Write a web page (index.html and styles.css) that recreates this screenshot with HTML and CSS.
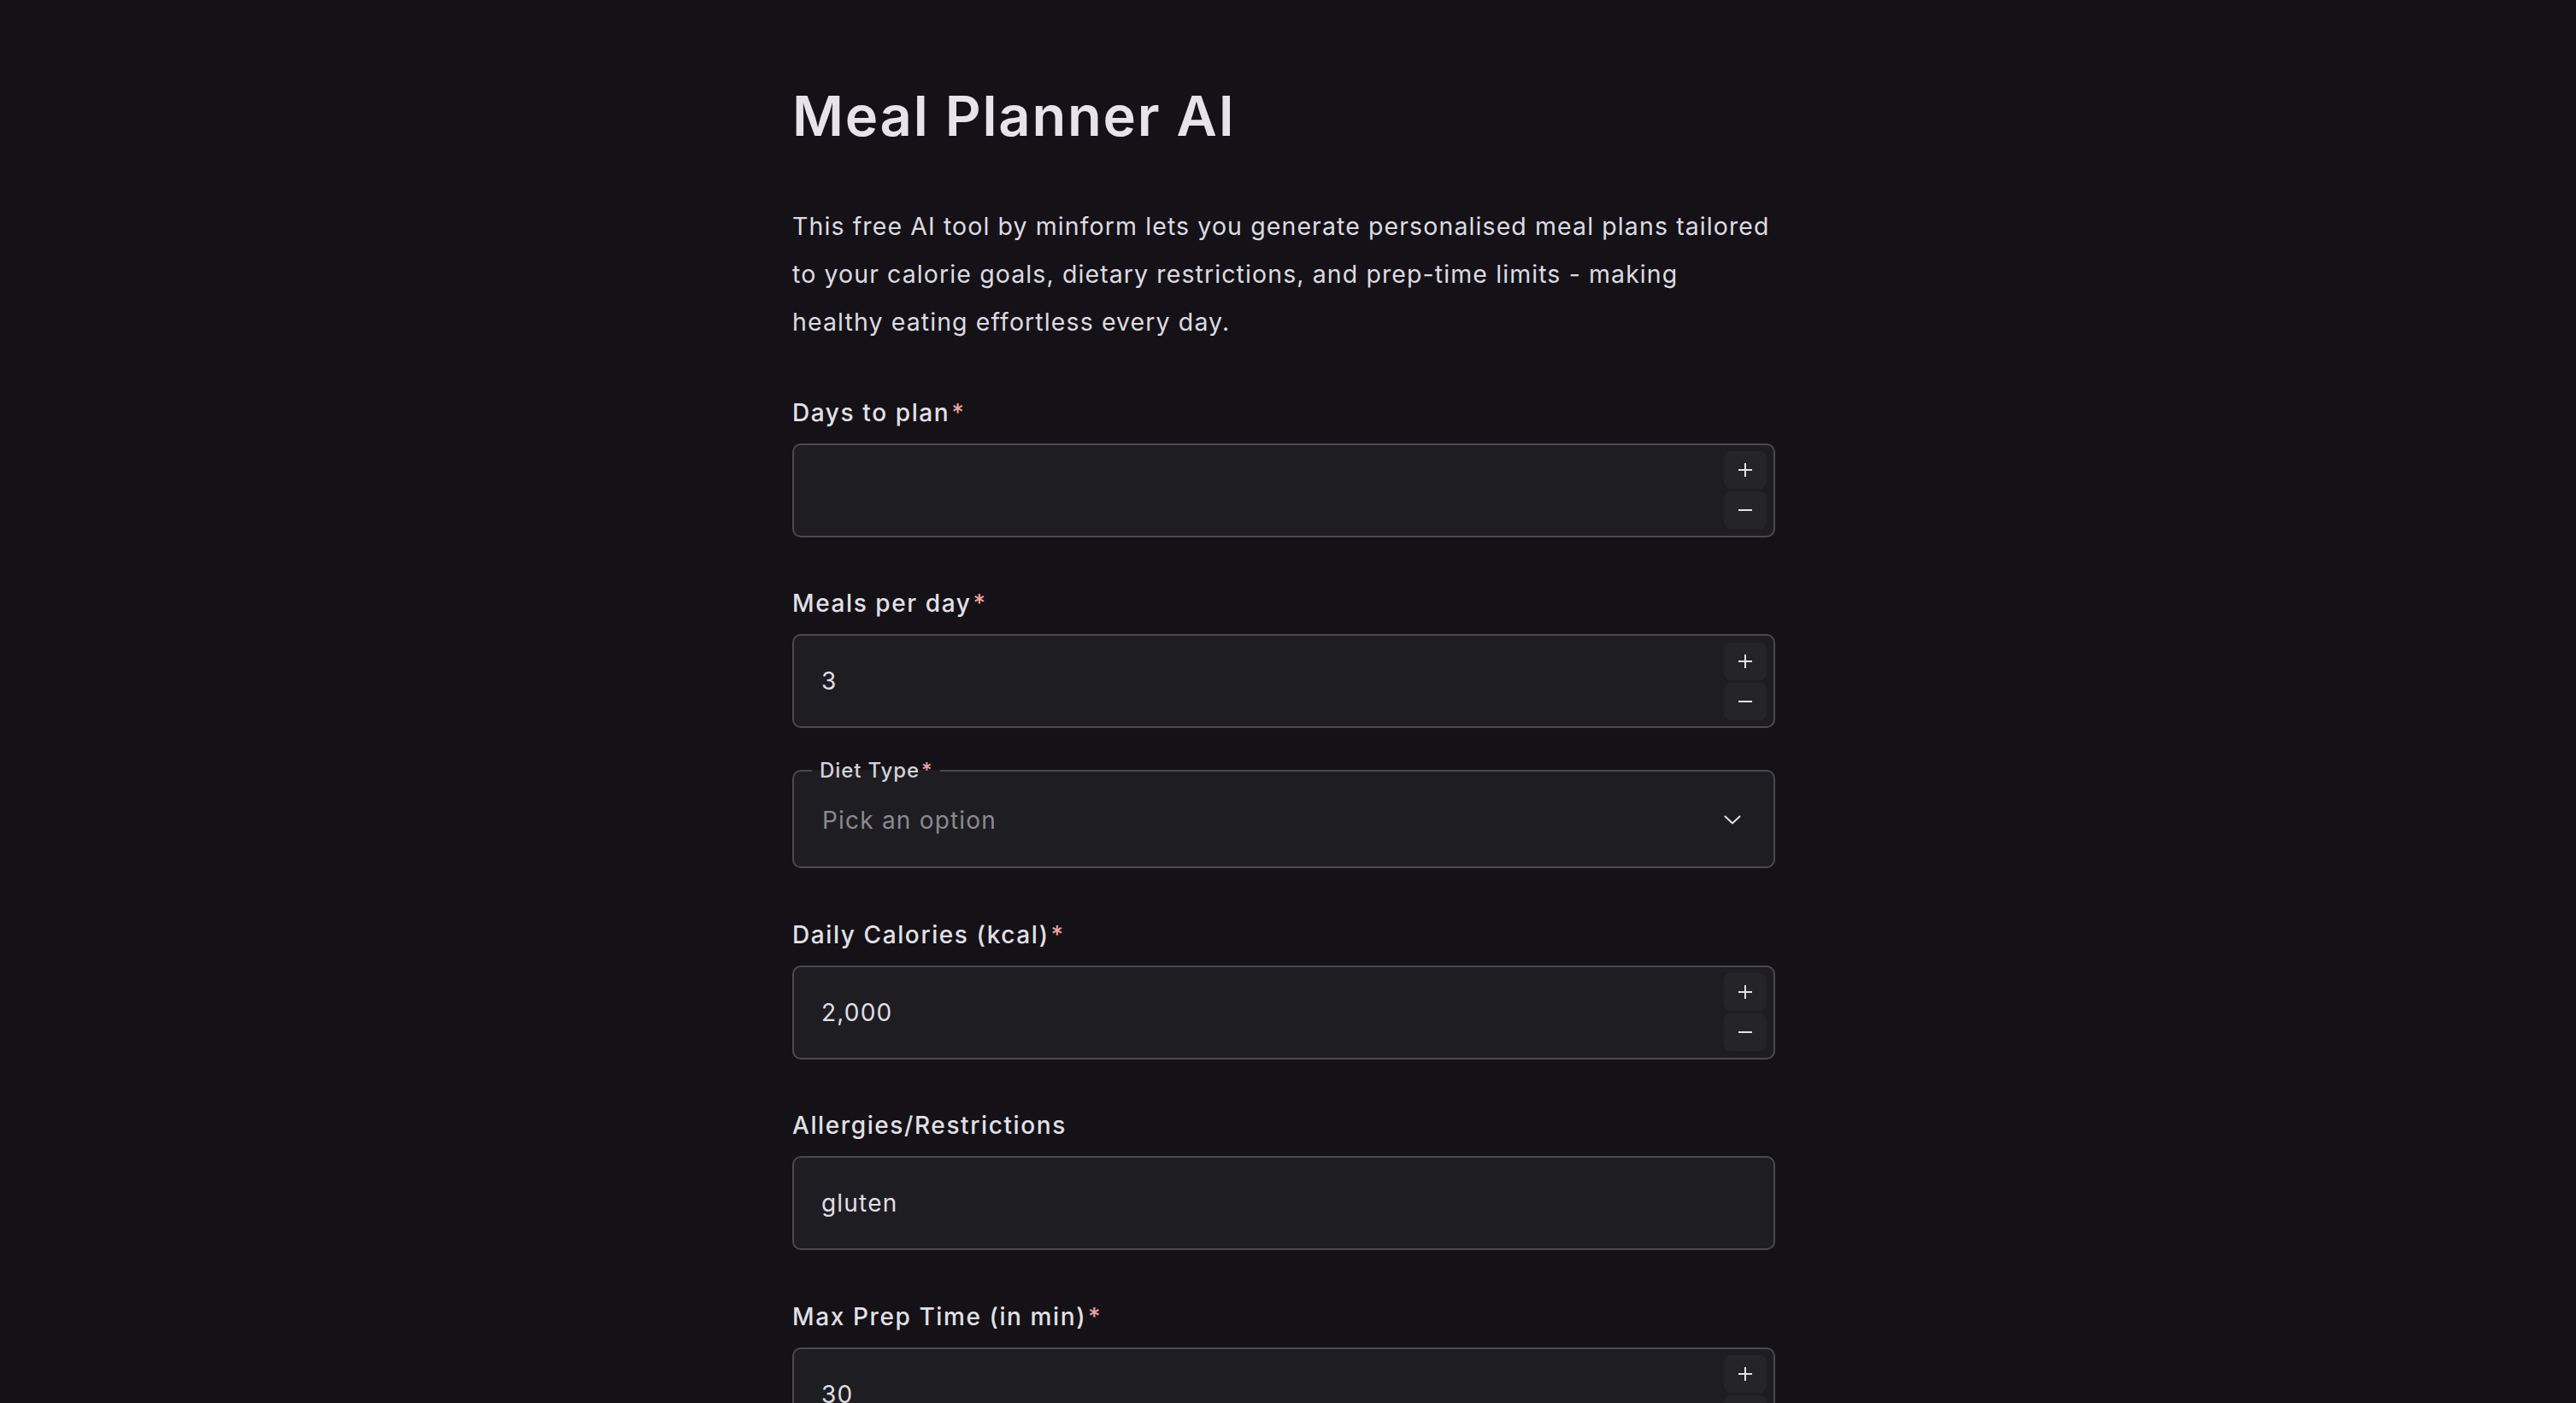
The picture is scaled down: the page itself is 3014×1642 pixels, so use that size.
FILE: index.html
```html
<!DOCTYPE html>
<html lang="en">
<head>
<meta charset="utf-8">
<title>Meal Planner AI</title>
<link rel="stylesheet" href="styles.css">
</head>
<body>
<main class="page">
  <h1 class="title">Meal Planner AI</h1>
  <p class="intro">This free AI tool by minform lets you generate personalised meal plans tailored to your calorie goals, dietary restrictions, and prep-time limits - making healthy eating effortless every day.</p>

  <form class="form">
    <div class="field">
      <label class="label">Days to plan<span class="req">*</span></label>
      <div class="box">
        <input class="control" type="text" value="">
        <div class="stepper">
          <button type="button" class="step"><svg viewBox="0 0 18 18" width="18" height="18"><path d="M9 1v16M1 9h16" stroke="currentColor" stroke-width="2" fill="none"/></svg></button>
          <button type="button" class="step"><svg viewBox="0 0 18 18" width="18" height="18"><path d="M1 9h16" stroke="currentColor" stroke-width="2" fill="none"/></svg></button>
        </div>
      </div>
    </div>

    <div class="field">
      <label class="label">Meals per day<span class="req">*</span></label>
      <div class="box">
        <input class="control" type="text" value="3">
        <div class="stepper">
          <button type="button" class="step"><svg viewBox="0 0 18 18" width="18" height="18"><path d="M9 1v16M1 9h16" stroke="currentColor" stroke-width="2" fill="none"/></svg></button>
          <button type="button" class="step"><svg viewBox="0 0 18 18" width="18" height="18"><path d="M1 9h16" stroke="currentColor" stroke-width="2" fill="none"/></svg></button>
        </div>
      </div>
    </div>

    <fieldset class="select-field">
      <legend class="legend">Diet Type<span class="req">*</span></legend>
      <div class="select-row">
        <span class="placeholder">Pick an option</span>
        <svg class="chevron" viewBox="0 0 20 11" width="20" height="11"><path d="M1.5 1.5l8.5 8 8.5-8" stroke="currentColor" stroke-width="2" fill="none" stroke-linecap="round" stroke-linejoin="round"/></svg>
      </div>
    </fieldset>

    <div class="field">
      <label class="label">Daily Calories (kcal)<span class="req">*</span></label>
      <div class="box">
        <input class="control" type="text" value="2,000">
        <div class="stepper">
          <button type="button" class="step"><svg viewBox="0 0 18 18" width="18" height="18"><path d="M9 1v16M1 9h16" stroke="currentColor" stroke-width="2" fill="none"/></svg></button>
          <button type="button" class="step"><svg viewBox="0 0 18 18" width="18" height="18"><path d="M1 9h16" stroke="currentColor" stroke-width="2" fill="none"/></svg></button>
        </div>
      </div>
    </div>

    <div class="field">
      <label class="label">Allergies/Restrictions</label>
      <div class="box">
        <input class="control" type="text" value="gluten">
      </div>
    </div>

    <div class="field">
      <label class="label">Max Prep Time (in min)<span class="req">*</span></label>
      <div class="box">
        <input class="control" type="text" value="30">
        <div class="stepper">
          <button type="button" class="step"><svg viewBox="0 0 18 18" width="18" height="18"><path d="M9 1v16M1 9h16" stroke="currentColor" stroke-width="2" fill="none"/></svg></button>
          <button type="button" class="step"><svg viewBox="0 0 18 18" width="18" height="18"><path d="M1 9h16" stroke="currentColor" stroke-width="2" fill="none"/></svg></button>
        </div>
      </div>
    </div>
  </form>
</main>
</body>
</html>
```

FILE: styles.css
```css
* { box-sizing: border-box; }

html, body {
  margin: 0;
  padding: 0;
  background: #141217;
}

body {
  font-family: "Inter", "Liberation Sans", sans-serif;
  color: #dddbe1;
}

.page {
  width: 1150px;
  margin-left: calc(50% - 580px);
  padding-top: 96px;
}

.title {
  margin: 0;
  font-size: 65px;
  line-height: 79px;
  font-weight: 600;
  color: #e6e3ea;
  letter-spacing: 1.8px;
}

.intro {
  margin: 62px 0 0;
  font-size: 28.5px;
  line-height: 56px;
  color: #dddbe1;
  letter-spacing: 1.1px;
}

.form {
  display: flex;
  flex-direction: column;
}

.field {
  display: flex;
  flex-direction: column;
  gap: 19px;
  margin-top: 59.5px;
}

.label {
  padding-top: 1px;
  font-size: 28px;
  line-height: 34px;
  font-weight: 500;
  color: #e2e0e6;
  letter-spacing: 1.6px;
}

.req {
  color: #f0a3a0;
  margin-left: 2px;
}

.box {
  height: 110px;
  display: flex;
  align-items: center;
  background: #1e1d22;
  border: 2px solid #4a4950;
  border-radius: 10px;
  padding-right: 8px;
}

.control {
  flex: 1;
  min-width: 0;
  height: 100%;
  border: 0;
  outline: none;
  background: transparent;
  padding: 0 0 0 32px;
  font-family: "Inter", "Liberation Sans", sans-serif;
  font-size: 28px;
  color: #e0dfe4;
  letter-spacing: 1.2px;
}

.stepper {
  display: flex;
  flex-direction: column;
  gap: 3px;
}

.step {
  width: 50px;
  height: 44px;
  border: 0;
  border-radius: 8px;
  background: #252429;
  color: #e4e3e8;
  padding: 0;
  display: flex;
  align-items: center;
  justify-content: center;
}

.select-field {
  margin: 35px 0 0;
  padding: 0;
  background: #1e1d22;
  border: 2px solid #4a4950;
  border-radius: 10px;
  min-width: 0;
}

.legend {
  margin-left: 21px;
  padding: 0 9px;
  font-size: 24px;
  line-height: 30px;
  font-weight: 500;
  color: #d4d2d8;
  letter-spacing: 0.9px;
}

.select-row {
  height: 97px;
  display: flex;
  align-items: center;
  justify-content: space-between;
  padding: 0 38px 12px 33px;
}

.placeholder {
  font-size: 28px;
  color: #8b8a90;
  letter-spacing: 1.2px;
}

.chevron {
  color: #e4e3e8;
  display: block;
}
```
